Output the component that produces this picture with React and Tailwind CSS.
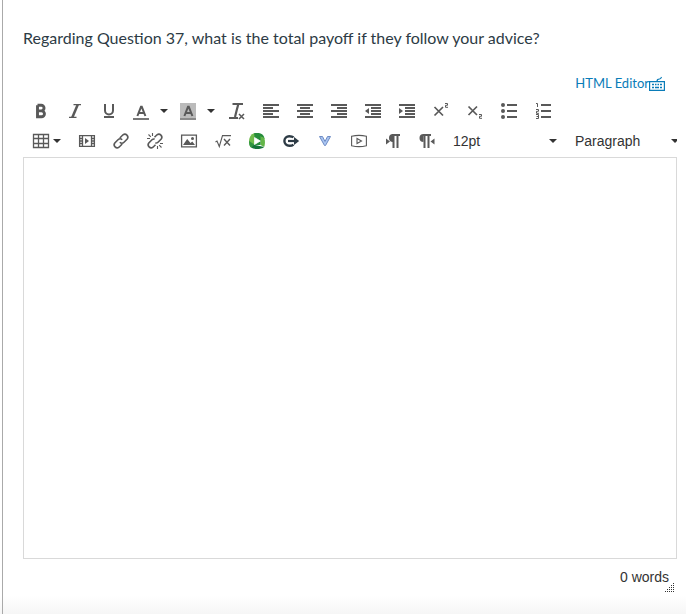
import React from "react";

const svgProps = {
  viewBox: "0 0 16 16",
  className: "block size-4 shrink-0 overflow-visible",
  fill: "none",
  stroke: "currentColor",
  strokeWidth: 2,
  "aria-hidden": true,
};

function Icon({ children }) {
  return <svg {...svgProps}>{children}</svg>;
}

function Caret() {
  return (
    <svg viewBox="0 0 8 4" className="block h-1 w-2 shrink-0 text-[#333]" fill="currentColor" aria-hidden="true">
      <path d="M0 0h8L4 4z" />
    </svg>
  );
}

function Tool({ label, children }) {
  return (
    <button type="button" aria-label={label} title={label} className="flex h-[30px] w-[34px] shrink-0 items-center justify-center">
      <Icon>{children}</Icon>
    </button>
  );
}

function ColorTool({ label, children }) {
  return (
    <div className="flex h-[30px] w-[47px] shrink-0 items-center gap-[11px] pl-[7px]">
      <button type="button" aria-label={label} title={label}>
        <Icon>{children}</Icon>
      </button>
      <button type="button" aria-label={label + " options"} className="flex h-4 items-center">
        <Caret />
      </button>
    </div>
  );
}

function Picker({ label, options }) {
  return (
    <div className="flex h-[30px] w-[122px] shrink-0 items-center">
      <select
        aria-label={label}
        className="h-[30px] w-[122px] shrink-0 appearance-none bg-transparent pl-[9px] text-sm text-[#333] outline-none"
      >
        {options.map((o) => (
          <option key={o}>{o}</option>
        ))}
      </select>
      <span className="pointer-events-none -ml-[17px]">
        <Caret />
      </span>
    </div>
  );
}

const letterA = <path d="M4.400 13 8 3.800h.8L12.400 13M5.800 10h5.200" strokeWidth="2" />;
const two = "M0 .5h2.500v1.800H.5v2H3";

function FormattingRow() {
  return (
    <div className="flex h-[30px] items-center">
      <Tool label="Bold">
        <path d="M4.500 2.200v11.600h4a2.900 2.900 0 0 0 0-5.900H4.500M8.200 7.900a2.800 2.800 0 0 0 0-5.700H4.500" strokeWidth="2.900" />
      </Tool>
      <Tool label="Italic">
        <path d="M6.500 1.700H14M2 14.300h7.500" strokeWidth="1.300" />
        <path d="M10.800 1.500 5.300 14.500" strokeWidth="2.500" />
      </Tool>
      <Tool label="Underline">
        <path d="M4 1v6.500a4 4 0 0 0 8 0V1" />
        <path d="M3 14h10" />
      </Tool>
      <ColorTool label="Text color">
        {letterA}
        <path d="M0 16h16" stroke="#777" />
      </ColorTool>
      <ColorTool label="Background color">
        <path d="M0 0h16v15H0z" fill="#bbb" stroke="none" />
        {letterA}
        <path d="M0 16h16" stroke="#8a8a8a" />
      </ColorTool>
      <Tool label="Clear formatting">
        <path d="M3.500 1H14M0 15h9" />
        <path d="M9.300 1 6 14" strokeWidth="2.200" />
        <path d="m10 11 5 5m0-5-5 5" strokeWidth="1.500" />
      </Tool>
      <Tool label="Align left">
        <path d="M0 2h16M0 5h10M0 8h16M0 11h10M0 14h16" />
      </Tool>
      <Tool label="Align center">
        <path d="M0 2h16M3 5h10M0 8h16M3 11h10M0 14h16" />
      </Tool>
      <Tool label="Align right">
        <path d="M0 2h16M6 5h10M0 8h16M6 11h10M0 14h16" />
      </Tool>
      <Tool label="Decrease indent">
        <path d="M0 2h16M6 5h10M6 8h10M6 11h10M0 14h16" />
        <path d="M4 5v6L0 8z" fill="currentColor" stroke="none" />
      </Tool>
      <Tool label="Increase indent">
        <path d="M0 2h16M6 5h10M6 8h10M6 11h10M0 14h16" />
        <path d="M0 5v6l4-3z" fill="currentColor" stroke="none" />
      </Tool>
      <Tool label="Superscript">
        <path d="m1.500 4 8.500 8.500m0-8.500-8.500 8.500" strokeWidth="1.700" />
        <path d={two} transform="translate(12)" strokeWidth="1" />
      </Tool>
      <Tool label="Subscript">
        <path d="m1.500 3.500 8.500 8.500m0-8.500-8.500 8.500" strokeWidth="1.700" />
        <path d={two} transform="translate(12 11)" strokeWidth="1" />
      </Tool>
      <Tool label="Bulleted list">
        <path d="M6 2h10M6 8h10M6 14h10" />
        <g fill="currentColor" stroke="none">
          <circle cx="2" cy="2" r="2" />
          <circle cx="2" cy="8" r="2" />
          <circle cx="2" cy="14" r="2" />
        </g>
      </Tool>
      <Tool label="Numbered list">
        <path d="M6 2h10M6 8h10M6 14h10" />
        <g strokeWidth="1">
          <path d="M1 .5h1.500V4" />
          <path d={two} transform="translate(1 6)" />
          <path d="M1 11.500h2.500v4H1M1.500 13.500h2" />
        </g>
      </Tool>
    </div>
  );
}

function InsertRow() {
  return (
    <div className="flex h-[30px] items-center">
      <button type="button" aria-label="Table" className="flex h-[30px] w-[46px] shrink-0 items-center gap-1 pl-[9px]">
        <Icon>
          <path d="M.5 1.500h15v13H.5zM5.500 1v14M10.500 1v14M0 5.500h16M0 10.500h16" strokeWidth="1.300" />
        </Icon>
        <Caret />
      </button>
      <Tool label="Embed media">
        <path d="M.6 2.600h14.800v10.800H.6zM3.500 2v12M12.500 2v12M1 5.500h2.500M1 8h2.500M1 10.500h2.500M12.500 5.500H15M12.500 8H15M12.500 10.500H15" strokeWidth="1.300" />
        <path d="M6 5v6l4-3z" fill="currentColor" stroke="none" />
      </Tool>
      <Tool label="Insert link">
        <g strokeWidth="1.600">
          <path d="m6.800 5 3.200-3.200a3 3 0 0 1 4.200 4.200L11 9.200a3 3 0 0 1-4.200 0" />
          <path d="m9.200 11-3.200 3.200a3 3 0 0 1-4.200-4.200L5 6.800a3 3 0 0 1 4.200 0" />
        </g>
      </Tool>
      <Tool label="Remove link">
        <g strokeWidth="1.600">
          <path d="m7.500 4.300 2.500-2.500a3 3 0 0 1 4.200 4.200L11 9.200c-.8.800-1.700 1-2.700.8" />
          <path d="m8.500 11.700-2.500 2.500a3 3 0 0 1-4.200-4.200L5 6.800c.8-.8 1.700-1 2.700-.8" />
          <path d="M5.500 0v3M1.500 1.500l2.300 2.300M0 5.500h3M10.500 13v3M12.200 12.200l2.300 2.300M13 10.500h3" strokeWidth="1.100" />
        </g>
      </Tool>
      <Tool label="Insert image">
        <path d="M.6 2.100h14.800v11.800H.6z" strokeWidth="1.300" />
        <path d="m2 12 4.200-6 3.300 4 1.800-1.500L14 12z" fill="currentColor" stroke="none" />
        <circle cx="11.500" cy="5.500" r="1.500" fill="currentColor" stroke="none" />
      </Tool>
      <Tool label="Insert math equation">
        <path d="m.5 9 1.500-1 2.300 5.500L7.500 2.600H16" strokeWidth="1.100" />
        <path d="m9 6 6 6.500M15 6l-6 6.500" strokeWidth="1.400" />
      </Tool>
      <Tool label="Panopto recording">
        <g stroke="none">
          <path d="M5 .3C7 0 10 0 11.500.5 14 1.500 15 3 15.500 5.500L13 8 4 5z" fill="#258c3b" />
          <path d="M11 3.500c2 0 3.700.7 4.500 2 .7 2.500.6 6-.3 8.500L11.500 12z" fill="#63b548" />
          <path d="M3.500 11.500 15.200 14c-1.700 1.500-4.500 2-7.200 2-2.500 0-4.500-.4-6-1.500z" fill="#14733a" />
          <path d="M5 .3C2 1.300.2 4 0 8c0 3 .6 5.300 2 6.500L5.500 11V3z" fill="#70bc4c" />
          <path d="M0 8c0 3 .6 5.300 2 6.500l3.500-3z" fill="#2f9440" />
          <path d="M5 4h6.500v8H5z" fill="#258c3b" />
          <path d="M5.500 4.500 11.300 8l-5.800 3.500z" fill="#fff" stroke="#fff" strokeWidth=".8" strokeLinejoin="round" />
        </g>
      </Tool>
      <Tool label="Commons favorites">
        <g stroke="#2d3b45">
          <path d="M10.500 4.400C9.500 3.500 8.200 3.200 6.200 3.200a4.800 4.800 0 0 0 0 9.600c2 0 3.300-.3 4.300-1.200" strokeWidth="2.400" />
          <path d="M5 8h7" strokeWidth="2.200" />
          <path d="M11 4v8l5.200-4z" fill="#2d3b45" stroke="none" />
        </g>
      </Tool>
      <Tool label="Vocabulary tool">
        <path d="M2.500 3.500h3L8 8.500l2.500-5h3L8.500 12.500h-1z" fill="#a9c5f2" stroke="#6f8cc4" strokeWidth="1" />
      </Tool>
      <Tool label="Insert video">
        <path d="M.6 3.300c5-1.200 9.800-1.200 14.800 0v9.400c-5 1.200-9.800 1.200-14.800 0z" strokeWidth="1.100" />
        <path d="M6 5.500v5L10.500 8z" strokeWidth="1.100" />
      </Tool>
      <Tool label="Left to right">
        <path d="M1 5.500v6l4-3z" fill="currentColor" stroke="none" />
        <path d="M8 1a4 4 0 0 0 0 8z" fill="currentColor" stroke="none" />
        <path d="M7 2h8M8.500 1v14M12.500 1v14" />
      </Tool>
      <Tool label="Right to left">
        <path d="M15.500 5.500v6l-4-3z" fill="currentColor" stroke="none" />
        <path d="M4.500 1a4 4 0 0 0 0 8z" fill="currentColor" stroke="none" />
        <path d="M4 2h8M5.500 1v14M9.500 1v14" />
      </Tool>
      <Picker label="Font size" options={["12pt", "8pt", "10pt", "14pt", "18pt", "24pt", "36pt"]} />
      <Picker label="Block format" options={["Paragraph", "Header 2", "Header 3", "Header 4", "Preformatted"]} />
    </div>
  );
}

export default function App() {
  return (
    <main className="flex min-h-screen bg-linear-to-t from-[#f6f6f6] to-white to-[18px] pl-[2px] font-['Liberation_Sans',Arial,sans-serif] text-[#595959]">
      <div className="min-w-0 grow border-l border-[#aaa] pt-[26px] pr-[9px] pl-5">
        <label htmlFor="answer" className="block font-[Lato,sans-serif] text-base leading-6 text-[#2d3b45]">
          Regarding Question 37, what is the total payoff if they follow your advice?
        </label>
        <div className="mt-[23px] flex h-5 items-center justify-end pr-3 font-[Lato,sans-serif] text-[13px] leading-5 text-[#0a7cb8]">
          <a href="#html">HTML Editor</a>
          <a href="#shortcuts" aria-label="Keyboard shortcuts" className="pt-1">
            <Icon>
              <path d="M.6 4.600h14.800v8.800H.6zM8 4.500c0-2 1-2.500 2.500-2.500S12 1 12.500 0" strokeWidth="1.200" />
              <path d="M3 7.500h2M6 7.500h1.500M8.500 7.500H10M11 7.500h2M3 10.500h2M6 10.500h4M11 10.500h2" strokeWidth="1.700" />
            </Icon>
          </a>
        </div>
        <div role="toolbar" aria-label="Editor toolbar" className="mt-[3px] overflow-hidden pl-px">
          <FormattingRow />
          <InsertRow />
        </div>
        <textarea
          id="answer"
          className="mt-px block h-[402px] w-full resize-none border border-[#d9d9d9] bg-white p-2 text-base outline-none"
        />
        <div className="flex items-start justify-end pt-2 pr-[3px] text-sm leading-5 text-[#333]">
          <span>0 words</span>
          <svg viewBox="0 0 9 9" className="mt-4 -ml-1 block size-[9px]" fill="#333" aria-hidden="true">
            {[0, 1, 2, 3, 4].map((row) =>
              [0, 1, 2, 3, 4]
                .filter((col) => col + row >= 4)
                .map((col) => <rect key={row + "-" + col} x={col * 2} y={row * 2} width="1" height="1" />)
            )}
          </svg>
        </div>
      </div>
    </main>
  );
}
